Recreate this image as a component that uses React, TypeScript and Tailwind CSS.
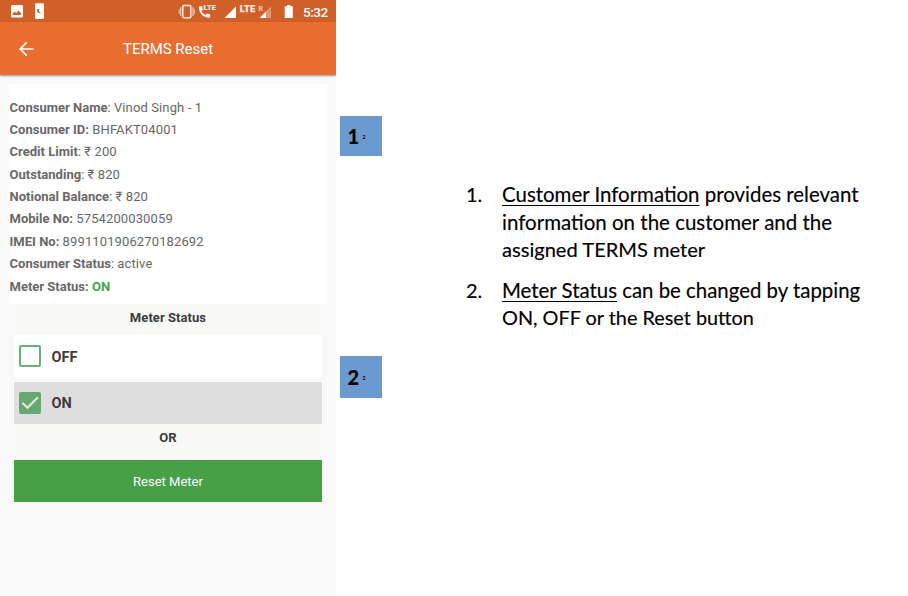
import React from "react";

const details = [
  { label: "Consumer Name", colon: false, value: "Vinod Singh - 1" },
  { label: "Consumer ID", colon: true, value: "BHFAKT04001" },
  { label: "Credit Limit", colon: false, value: "₹ 200" },
  { label: "Outstanding", colon: false, value: "₹ 820" },
  { label: "Notional Balance", colon: false, value: "₹ 820" },
  { label: "Mobile No", colon: true, value: "5754200030059" },
  { label: "IMEI No", colon: true, value: "8991101906270182692" },
  { label: "Consumer Status", colon: false, value: "active" },
];

function StatusBar() {
  return (
    <div className="h-[22px] bg-[#d06028]">
      <svg width="336" height="22" viewBox="0 0 336 22" className="block">
        <rect x="11" y="5" width="12" height="12.5" rx="1.5" fill="#fff" />
        <path d="M12.7 15v-1.6l2-2 1.7 1.6 2.3-2.6 2.5 3V15z" fill="#d06028" />
        <rect x="35" y="3.3" width="9" height="15.7" rx="1.3" fill="#fff" />
        <path d="M37.4 8.8c-1.1 2.8.9 5.4 4.3 4.3-2.2 0-3.4-1.6-2.6-3.9z" fill="#d06028" />
        <rect x="182.8" y="5.6" width="8" height="12.1" rx="1" fill="none" stroke="#fbe9e0" strokeWidth="1.5" />
        <path d="M180.7 7.3v8.6M193 7.3v8.6" stroke="#fff" strokeOpacity=".55" strokeWidth="1.5" />
        <path d="M179.2 9.3v4.8M194.5 9.3v4.8" stroke="#fff" strokeOpacity=".5" strokeWidth="1.2" />
        <path d="M199.6 6.2h2.4l.9 3.2-1.5 1.7c.9 1.7 2.1 2.9 3.8 3.8l1.8-1.5 3.2.9v2.5c0 .6-.4.9-1 .9-5.8 0-10.4-4.6-10.4-10.4 0-.7.3-1.1.8-1.1z" fill="#fff" />
        <text x="203.6" y="10" fontSize="7.3" fontWeight="900" fill="#f8e5dc" stroke="#f8e5dc" strokeWidth=".2" fontFamily="Roboto, sans-serif" textLength="12.3" lengthAdjust="spacingAndGlyphs">LTE</text>
        <path d="M236 6.5V18H224.5z" fill="#fff" />
        <text x="239.8" y="11.8" fontSize="9.2" fontWeight="900" fill="#f8e5dc" stroke="#f8e5dc" strokeWidth=".25" fontFamily="Roboto, sans-serif" textLength="15.4">LTE</text>
        <text x="258.6" y="10.7" fontSize="6.8" fontWeight="700" fill="#f0c9b4" stroke="#f0c9b4" strokeWidth=".2" fontFamily="Roboto, sans-serif">R</text>
        <path d="M271 6.5V18H265.5V12z" fill="#fff" fillOpacity=".35" />
        <path d="M266 11.5V18h-6.5z" fill="#fff" />
        <path d="M287 5h3.5v1.3h2.3V18h-8.1V6.3h2.3z" fill="#fff" />
        <text x="303" y="16.6" fontSize="13.5" fontWeight="500" fill="#fff" fontFamily="Roboto, sans-serif" textLength="25.2">5:32</text>
      </svg>
    </div>
  );
}

function Callout({ n, className }: { n: string; className: string }) {
  return (
    <div className={`flex w-[42px] items-center bg-[#6b9ad0] pl-[7.5px] text-black ${className}`}>
      <span className="w-[11.5px] text-[20px] leading-none font-black">{n}</span>
      <span className="ml-[3.5px] mt-[3px] text-[5px] leading-none font-bold">2</span>
    </div>
  );
}

export default function App() {
  return (
    <div className="flex h-[596px] w-[908px] overflow-hidden bg-white font-[Roboto,sans-serif]">
      <section className="h-full w-[336px] overflow-hidden bg-[#fafafa]">
        <StatusBar />
        <header className="flex h-[52.5px] items-center bg-[#e86f30] pl-[18px] text-white shadow-[0_1px_2px_rgba(0,0,0,0.4)]">
          <svg width="17" height="16" viewBox="0 0 17 16" fill="none" stroke="#fff" strokeWidth="1.6" className="mt-[1px]">
            <path d="M15.7 8H2M8.7 1.4 2.1 8l6.6 6.6" />
          </svg>
          <h1 className="ml-[88px] pt-[1.5px] text-[15px] tracking-[-0.02px]">TERMS Reset</h1>
        </header>
        <main className="ml-[9px] mt-[9.5px] w-[318px]">
          <div className="h-[219.5px] bg-white pl-[0.5px] pt-[12.6px] text-[13px] leading-[22.37px] text-[#686868]">
            {details.map((d) => (
              <p key={d.label} className="whitespace-nowrap">
                <b className="tracking-[0.02px]">{d.label}{d.colon && ":"}</b>{!d.colon && ":"} <span className="tracking-[0.12px]">{d.value}</span>
              </p>
            ))}
            <p><b>Meter Status: <span className="text-[#45a34a]">ON</span></b></p>
          </div>
          <div className="h-[202px] bg-[#f9f9f7] px-[5px] text-[#3c3c3c]">
            <h2 className="h-[31.5px] pt-[4px] text-center text-[13px] leading-[20px] font-bold tracking-[0.06px]">Meter Status</h2>
            <div className="flex h-[42px] items-center bg-white pl-[5.4px]">
              <span className="h-[22px] w-[22px] rounded-[2px] border-2 border-[#69b077] bg-white" />
              <span className="ml-[10.1px] pt-[3px] text-[14.5px] font-bold">OFF</span>
            </div>
            <div className="mt-[4.5px] flex h-[42px] items-center bg-[#dedede] pl-[5.4px]">
              <span className="flex h-[22px] w-[22px] items-center justify-center rounded-[2px] bg-[#65a970]">
                <svg width="18" height="14" viewBox="0 0 18 14" fill="none" stroke="#e3e8e3" strokeWidth="2.2">
                  <path d="m1.3 6.8 5.2 5L16.7 1.5" />
                </svg>
              </span>
              <span className="ml-[10.1px] pt-[3px] text-[14.5px] font-bold">ON</span>
            </div>
            <p className="h-[36.5px] pt-[4.5px] text-center text-[13px] leading-[20px] font-bold">OR</p>
            <button className="block h-[42px] w-full bg-[#47a048] pt-[2px] text-[13px] text-white">Reset Meter</button>
          </div>
        </main>
      </section>
      <aside className="ml-1 w-[42px] font-[Lato,sans-serif]">
        <Callout n="1" className="mt-[116px] h-[40px]" />
        <Callout n="2" className="mt-[200px] h-[42px]" />
      </aside>
      <ol className="ml-[84px] mt-[181px] w-[400px] font-[Lato,sans-serif] text-[20px] leading-[27.7px] whitespace-nowrap text-black [-webkit-text-stroke:0.15px_black]">
        <li className="flex">
          <span className="w-[36px]">1.</span>
          <div>
            <p className="text-[20.45px]"><span className="underline decoration-1 underline-offset-[3px]">Customer Information</span> provides relevant</p>
            <p className="text-[20.5px]">information on the customer and the</p>
            <p className="text-[20.1px]">assigned TERMS meter</p>
          </div>
        </li>
        <li className="mt-[12.5px] flex">
          <span className="w-[36px]">2.</span>
          <div>
            <p className="text-[20.4px]"><span className="underline decoration-1 underline-offset-[3px]">Meter Status</span> can be changed by tapping</p>
            <p className="text-[19.85px]">ON, OFF or the Reset button</p>
          </div>
        </li>
      </ol>
    </div>
  );
}
